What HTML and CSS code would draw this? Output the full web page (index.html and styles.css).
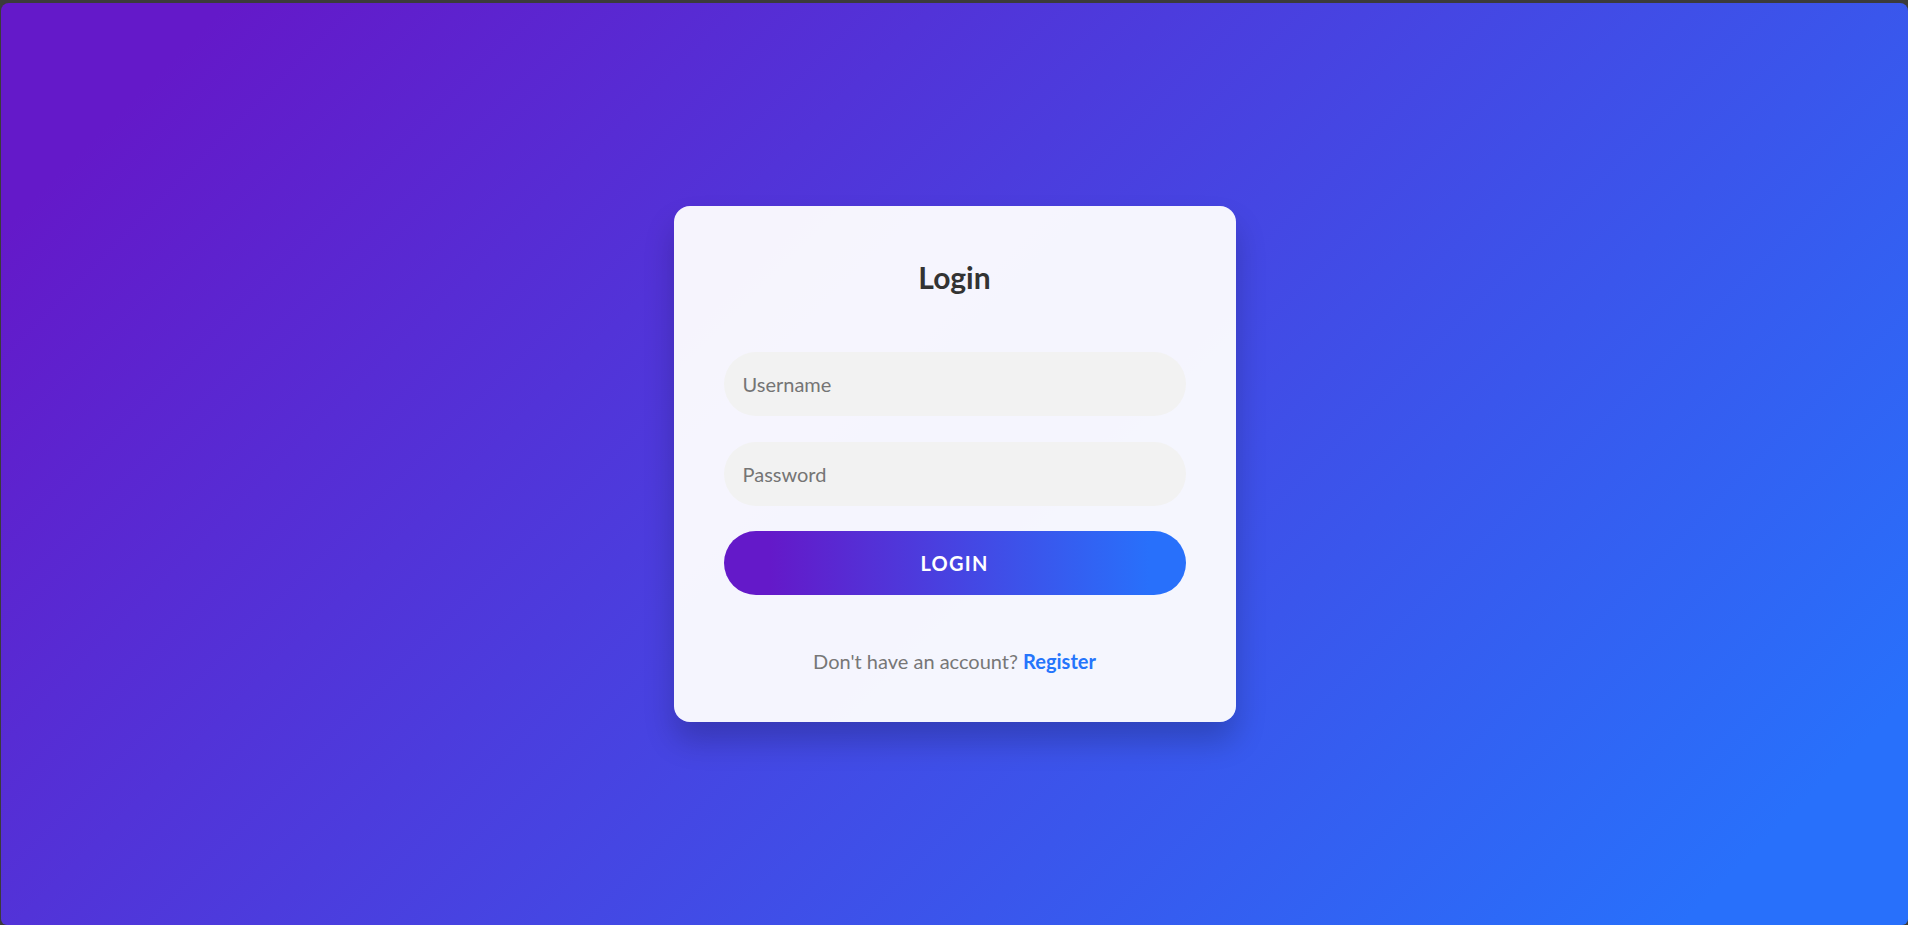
FILE: index.html
```html
<!DOCTYPE html>
<html lang="en">
<head>
<meta charset="utf-8">
<title>Login</title>
<link rel="stylesheet" href="styles.css">
</head>
<body>
<div class="window">
  <div class="card">
    <h1 class="title">Login</h1>
    <form class="form">
      <input class="field" type="text" placeholder="Username">
      <input class="field" type="password" placeholder="Password">
      <button class="btn" type="button">LOGIN</button>
    </form>
    <p class="footer">Don't have an account? <a class="link" href="#">Register</a></p>
  </div>
</div>
</body>
</html>
```

FILE: styles.css
```css
html, body {
  margin: 0;
  padding: 0;
  height: 100%;
}
body {
  background: #3b3b3b;
  font-family: Lato, "Open Sans", "Noto Sans", sans-serif;
  overflow: hidden;
}
.window {
  box-sizing: border-box;
  margin: 3px 0 0 1px;
  height: 922px;
  border-radius: 8px 8px 6px 6px;
  background: linear-gradient(135deg, #6419c9 8%, #2870fb 92%);
  display: flex;
  align-items: center;
  justify-content: center;
}
.card {
  box-sizing: border-box;
  width: 562px;
  padding: 50px 50px 47px;
  background: rgba(255, 255, 255, 0.95);
  border-radius: 16px;
  box-shadow: 0 19px 31px rgba(0, 0, 0, 0.2);
  text-align: center;
}
.title {
  margin: 0;
  font-size: 30px;
  line-height: 43px;
  font-weight: 700;
  color: #333;
}
.form {
  margin-top: 53px;
  display: flex;
  flex-direction: column;
}
.field {
  box-sizing: border-box;
  height: 64px;
  width: 100%;
  padding: 0 19px;
  border: none;
  outline: none;
  border-radius: 32px;
  background: #f2f2f2;
  font-family: inherit;
  font-size: 20px;
  color: #333;
}
.field + .field {
  margin-top: 26px;
}
.field::placeholder {
  color: #757575;
}
.btn {
  margin-top: 25px;
  height: 64px;
  width: 100%;
  border: none;
  border-radius: 32px;
  background: linear-gradient(90deg, #6419c9 10%, #2870fb 92%);
  color: #fff;
  font-family: inherit;
  font-size: 20px;
  font-weight: 700;
  letter-spacing: 1.25px;
  cursor: pointer;
}
.footer {
  margin: 52px 0 0;
  font-size: 20px;
  line-height: 28px;
  color: #777;
}
.link {
  color: #2575fc;
  font-weight: 700;
  text-decoration: none;
}
```
